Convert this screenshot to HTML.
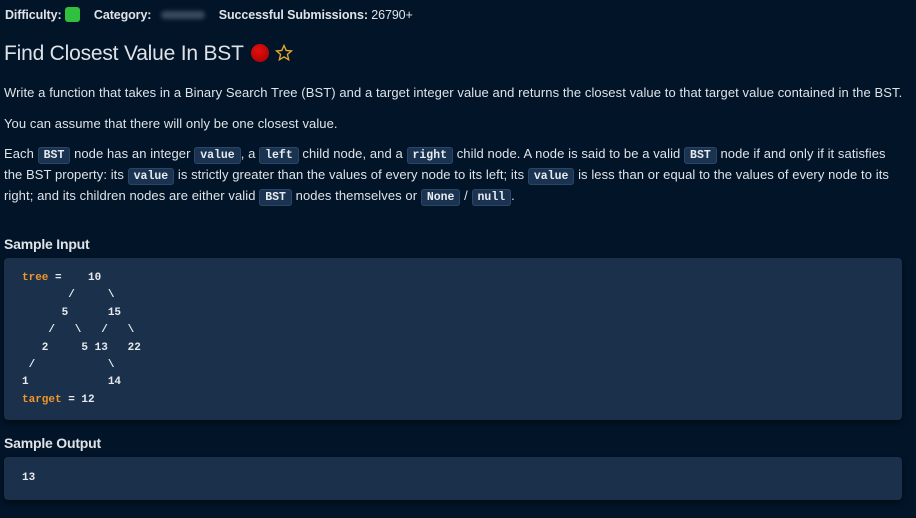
<!DOCTYPE html>
<html><head><meta charset="utf-8"><style>
body{margin:0;width:916px;height:518px;background:#021427;color:#dfe3e8;font-family:"Liberation Sans",sans-serif;overflow:hidden;position:relative}
.a{position:absolute;white-space:nowrap}
.p{font-size:13px;letter-spacing:0.08px}
code{font-family:"Liberation Mono",monospace;font-size:11.5px;font-weight:bold;background:#1a3350;border:1px solid #2a4566;border-radius:3px;padding:1px 5px;color:#e8ecf0;letter-spacing:0}
.box{position:absolute;left:4px;width:898px;background:#1a304b;border-radius:4px;box-shadow:0 2px 4px rgba(0,0,0,.5)}
pre{margin:0;font-family:"Liberation Mono",monospace;font-size:11px;font-weight:bold;line-height:17.4px;color:#e6eaee}
.o{color:#f0962a}
h3{margin:0;font-size:14px;font-weight:bold;letter-spacing:-0.2px}
</style></head><body>
<div class="a" style="left:5px;top:7px;font-size:12.5px;font-weight:bold;letter-spacing:-0.1px">Difficulty: <span style="display:inline-block;width:15px;height:15px;background:#2fc13d;border-radius:3px;vertical-align:-3px"></span><span style="margin-left:14px">Category:</span> <span style="display:inline-block;width:44px;height:8px;background:#3a4a5e;border-radius:4px;filter:blur(2px);margin:0 14px 0 6px"></span>Successful Submissions: <span style="font-weight:normal">26790+</span></div>
<div class="a" style="left:4px;top:42px;font-size:21px;letter-spacing:-0.2px">Find Closest Value In BST <span style="display:inline-block;width:18px;height:18px;border-radius:50%;background:radial-gradient(circle at 40% 35%,#e41010,#a00000);vertical-align:-2px;margin-left:2px"></span> <svg width="18" height="18" viewBox="0 0 24 24" style="vertical-align:-2px"><path d="M12 2l2.9 6.6 7.1.6-5.4 4.7 1.6 7-6.2-3.7-6.2 3.7 1.6-7L2 9.2l7.1-.6z" fill="none" stroke="#e6a92a" stroke-width="1.8"/></svg></div>
<div class="a p" style="left:4px;top:85px">Write a function that takes in a Binary Search Tree (BST) and a target integer value and returns the closest value to that target value contained in the BST.</div>
<div class="a p" style="left:4px;top:116px">You can assume that there will only be one closest value.</div>
<div class="a p" style="left:4px;top:146px">Each <code>BST</code> node has an integer <code>value</code>, a <code>left</code> child node, and a <code>right</code> child node. A node is said to be a valid <code>BST</code> node if and only if it satisfies</div>
<div class="a p" style="left:4px;top:167px">the BST property: its <code>value</code> is strictly greater than the values of every node to its left; its <code>value</code> is less than or equal to the values of every node to its</div>
<div class="a p" style="left:4px;top:188px">right; and its children nodes are either valid <code>BST</code> nodes themselves or <code>None</code> / <code>null</code>.</div>
<h3 class="a" style="left:4px;top:236px">Sample Input</h3>
<div class="box" style="top:258px;height:162px"><pre style="padding:12px 0 0 18px"><span class="o">tree</span> =    10
       /     \
      5      15
    /   \   /   \
   2     5 13   22
 /           \
1            14
<span class="o">target</span> = 12</pre></div>
<h3 class="a" style="left:4px;top:435px">Sample Output</h3>
<div class="box" style="top:457px;height:43px"><pre style="padding:13px 0 0 18px">13</pre></div>
</body></html>
